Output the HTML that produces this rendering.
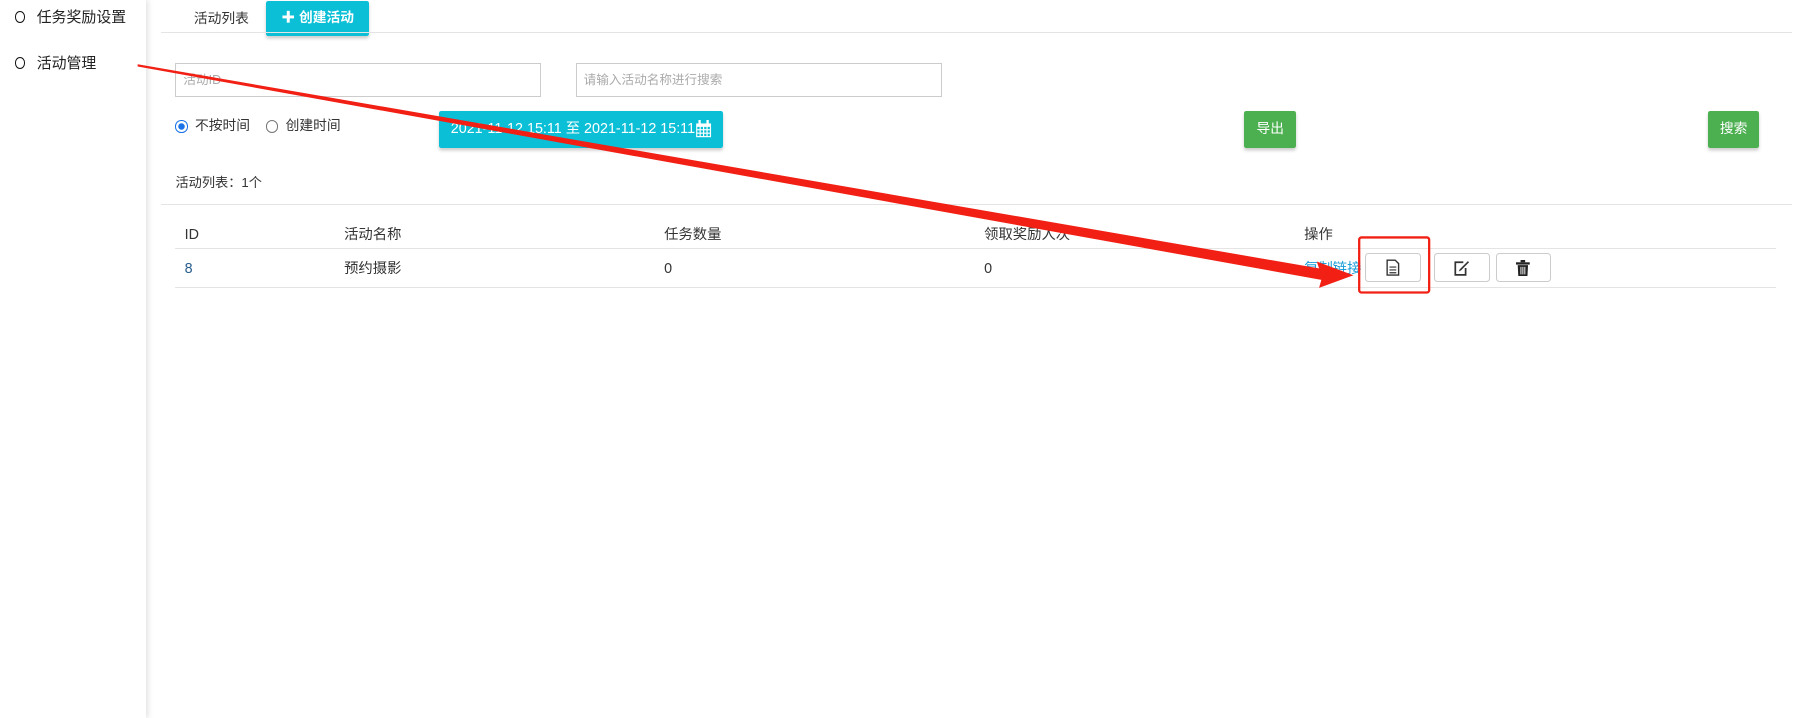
<!DOCTYPE html>
<html><head><meta charset="utf-8"><style>
html,body{margin:0;padding:0;background:#fff;}
body{width:1795px;height:718px;overflow:hidden;position:relative;}
#w{position:absolute;left:0;top:0;width:1565px;height:626px;zoom:1.147;font-family:"Liberation Sans","Noto Sans CJK SC",sans-serif;color:#333;font-size:12px;}
.a{position:absolute;white-space:nowrap;line-height:16px;}
.side{left:0;top:0;width:127px;height:626px;box-shadow:2px 0 5px rgba(0,0,0,.12);background:#fff;}
.circ{width:7px;height:8px;border:1.5px solid #111;border-radius:50%;}
.inp{border:1px solid #ccc;height:28px;color:#aaa;font-size:11px;line-height:28px;padding-left:6px;box-sizing:border-box;}
.btn{color:#fff;text-align:center;border-radius:2px;box-shadow:0 2px 3px rgba(0,0,0,.2);}
.line{height:1px;background:#e4e4e4;}
.ib{width:49px;height:25px;border:1px solid #ccc;border-radius:3px;box-sizing:border-box;background:#fff;display:flex;align-items:center;justify-content:center;}
</style></head><body><div id="w">
<div class="a side"></div>
<div class="a circ" style="left:13px;top:10px"></div>
<div class="a" style="left:32px;top:8px;font-size:13px;color:#222">任务奖励设置</div>
<div class="a circ" style="left:13px;top:50px"></div>
<div class="a" style="left:32px;top:48px;font-size:13px;color:#222">活动管理</div>

<div class="a" style="left:169px;top:9px;font-size:12px">活动列表</div>
<div class="a btn" style="left:232px;top:1px;width:90px;height:30px;background:#0bbfd6;line-height:30px;font-size:12px;font-weight:bold">✚ 创建活动</div>
<div class="a line" style="left:140px;top:28px;width:1422px"></div>

<div class="a inp" style="left:153px;top:55px;width:319px;height:30px;line-height:28px">活动ID</div>
<div class="a inp" style="left:502px;top:55px;width:319px;height:30px;line-height:28px">请输入活动名称进行搜索</div>

<div class="a" style="left:153px;top:105px;width:9px;height:9px;border:1px solid #1a73e8;border-radius:50%;background:radial-gradient(#1a73e8 38%,#fff 45%)"></div>
<div class="a" style="left:170px;top:102px;font-size:12px">不按时间</div>
<div class="a" style="left:232px;top:105px;width:9px;height:9px;border:1px solid #777;border-radius:50%"></div>
<div class="a" style="left:249px;top:102px;font-size:12px">创建时间</div>

<div class="a btn" style="left:383px;top:97px;width:247px;height:32px;background:#0bbfd6;line-height:32px;font-size:12.5px;text-align:left;padding-left:10px;box-sizing:border-box">2021-11-12 15:11 至 2021-11-12 15:11
<svg width="15" height="16" viewBox="0 0 15 16" style="position:absolute;right:9px;top:8px"><rect x="1" y="3" width="13" height="12" fill="#fff"/><rect x="3" y="0" width="2" height="4" fill="#fff"/><rect x="10" y="0" width="2" height="4" fill="#fff"/><g fill="#0bbfd6"><rect x="2" y="6" width="2" height="2"/><rect x="5" y="6" width="2" height="2"/><rect x="8" y="6" width="2" height="2"/><rect x="11" y="6" width="2" height="2"/><rect x="2" y="9" width="2" height="2"/><rect x="5" y="9" width="2" height="2"/><rect x="8" y="9" width="2" height="2"/><rect x="11" y="9" width="2" height="2"/><rect x="2" y="12" width="2" height="2"/><rect x="5" y="12" width="2" height="2"/><rect x="8" y="12" width="2" height="2"/><rect x="11" y="12" width="2" height="2"/></g></svg></div>
<div class="a btn" style="left:1085px;top:97px;width:45px;height:32px;background:#4caf50;line-height:32px;font-size:12px">导出</div>
<div class="a btn" style="left:1489px;top:97px;width:45px;height:32px;background:#4caf50;line-height:32px;font-size:12px">搜索</div>

<div class="a" style="left:153px;top:152px;font-size:11.5px">活动列表：1个</div>
<div class="a line" style="left:140px;top:178px;width:1422px"></div>

<div class="a" style="left:161px;top:197px;font-size:12.5px">ID</div>
<div class="a" style="left:300px;top:197px;font-size:12.5px">活动名称</div>
<div class="a" style="left:579px;top:197px;font-size:12.5px">任务数量</div>
<div class="a" style="left:858px;top:197px;font-size:12.5px">领取奖励人次</div>
<div class="a" style="left:1137px;top:197px;font-size:12.5px">操作</div>
<div class="a line" style="left:153px;top:216px;width:1395px"></div>
<div class="a" style="left:161px;top:227px;font-size:12.5px;color:#2a5d8c">8</div>
<div class="a" style="left:300px;top:227px;font-size:12.5px">预约摄影</div>
<div class="a" style="left:579px;top:227px;font-size:12.5px">0</div>
<div class="a" style="left:858px;top:227px;font-size:12.5px">0</div>
<div class="a" style="left:1137px;top:227px;font-size:12.5px;color:#1a9bd7">复制链接</div>
<div class="a ib" style="left:1190px;top:221px"><svg width="12" height="15" viewBox="0 0 12 15"><path d="M1 1H8L11 4V14H1Z" fill="none" stroke="#333" stroke-width="1.2"/><path d="M3 7H9M3 9.5H9M3 12H9" stroke="#333"/></svg></div>
<div class="a ib" style="left:1250px;top:221px"><svg width="15" height="14" viewBox="0 0 15 14"><path d="M9 2H2V13H11V7" fill="none" stroke="#333" stroke-width="1.5"/><path d="M13 1L6 8L5 10L7 9L14 2Z" fill="#333"/></svg></div>
<div class="a ib" style="left:1304px;top:221px;width:48px"><svg width="12" height="14" viewBox="0 0 12 14"><rect x="0" y="2" width="12" height="2" fill="#222"/><rect x="4" y="0" width="4" height="2" fill="#222"/><path d="M1.5 4.5H10.5L10 14H2Z" fill="#222"/><path d="M4.3 6V12.5M6 6V12.5M7.7 6V12.5" stroke="#fff" stroke-width=".8"/></svg></div>
<div class="a line" style="left:153px;top:250px;width:1395px"></div>

<svg class="a" style="left:0;top:0" width="1565" height="626">
<polygon points="120,56 1150,234 1148,228 1180,240 1150,251 1152,244 120,58" fill="#f22014"/>
<rect x="1185" y="207" width="61" height="48" rx="2" fill="none" stroke="#f22014" stroke-width="2"/>
</svg>
</div></body></html>
